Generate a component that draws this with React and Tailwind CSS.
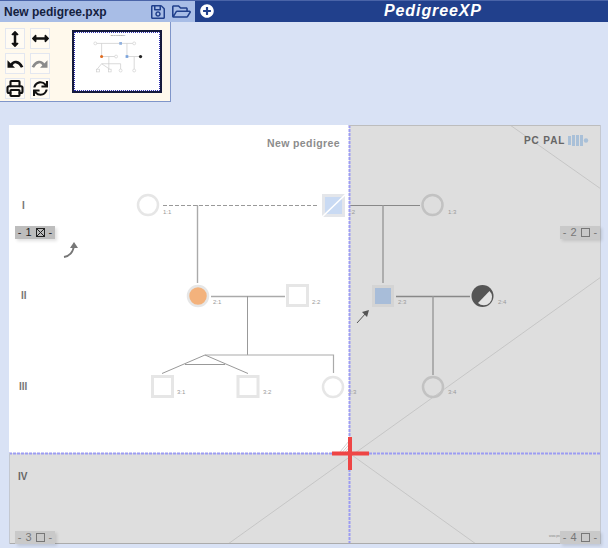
import { FaArrowsAltV, FaArrowsAltH, FaPlusCircle, FaRegSave, FaRegFolderOpen, FaSync } from "react-icons/fa";
import { LuPrinter } from "react-icons/lu";

const font = { fontFamily: "'Liberation Sans', Arial, sans-serif" };

const ToolButton = ({ children, muted }) => (
  <div
    className={`w-[20px] h-[21px] flex items-center justify-center bg-white/40 border border-[#e3e7f0] ${
      muted ? "text-[#8a8a8a]" : "text-[#111]"
    }`}
  >
    {children}
  </div>
);

const UndoIcon = ({ flip }) => (
  <svg width="19" height="19" viewBox="0 0 24 24" className={flip ? "-scale-x-100" : ""}>
    <path d="M7 14C10 8.5 17 8 21.5 17" fill="none" stroke="currentColor" strokeWidth="3.6" />
    <path d="M2 7.5V17.5H12Z" fill="currentColor" />
  </svg>
);

const Thumbnail = () => (
  <div className="w-[90px] h-[63px] border-2 border-[#161b3c] bg-white mt-[2px]">
    <svg viewBox="0 0 90 63" className="w-full h-full border border-dotted border-[#3030b0]">
      <text x="38" y="3" fontSize="2.6" fill="#555">New pedigree</text>
      <path d="M21 11.5H64M28 11.5V26M56 11.5V26M29 26H44M57 26H71M36 26V40M64 26V40M28 34H49V40M28 34L23 40M28 34L37 40" stroke="#ccc" strokeWidth="0.8" fill="none" />
      <circle cx="21" cy="11.5" r="1.6" fill="#fff" stroke="#ccc" strokeWidth="0.7" />
      <rect x="47.5" y="10" width="3" height="3" fill="#8fb0de" />
      <circle cx="64" cy="11.5" r="1.6" fill="#fff" stroke="#ccc" strokeWidth="0.7" />
      <circle cx="28" cy="26" r="1.7" fill="#e06b20" />
      <circle cx="44" cy="26" r="1.6" fill="#fff" stroke="#ccc" strokeWidth="0.7" />
      <rect x="54.5" y="24.5" width="3" height="3" fill="#7aa3dc" />
      <circle cx="71" cy="26" r="1.8" fill="#222" />
      <rect x="22.5" y="40" width="3" height="3" fill="#fff" stroke="#ccc" strokeWidth="0.7" />
      <rect x="35.5" y="40" width="3" height="3" fill="#fff" stroke="#ccc" strokeWidth="0.7" />
      <circle cx="49" cy="41.5" r="1.6" fill="#fff" stroke="#ccc" strokeWidth="0.7" />
      <circle cx="64" cy="41.5" r="1.6" fill="#fff" stroke="#ccc" strokeWidth="0.7" />
    </svg>
  </div>
);

const PageTag = ({ label, active, className }) => (
  <div
    className={`absolute w-[40px] h-[13px] flex items-center justify-center gap-[4px] text-[11px] leading-none shadow-[2px_2px_3px_rgba(0,0,0,0.12)] ${className} ${
      active ? "bg-[#bdbdbd] text-[#222]" : "bg-[#c9c9c9] text-[#777]"
    }`}
  >
    <span>-</span>
    <span>{label}</span>
    {active ? (
      <svg width="9" height="9" viewBox="0 0 9 9">
        <rect x="0.5" y="0.5" width="8" height="8" fill="none" stroke="#222" />
        <path d="M1 1L8 8M8 1L1 8" stroke="#222" strokeWidth="1" />
      </svg>
    ) : (
      <svg width="9" height="9" viewBox="0 0 9 9">
        <rect x="0.5" y="0.5" width="8" height="8" fill="none" stroke="#777" />
      </svg>
    )}
    <span>-</span>
  </div>
);

const Label = ({ x, y, children }) => (
  <text x={x} y={y} fontSize="6" fill="#999">{children}</text>
);

const Pedigree = () => (
  <svg viewBox="9 125 592 419" className="w-[592px] h-[419px] block" style={font}>
    <rect x="9" y="125" width="592" height="419" fill="#dedede" />
    <rect x="9" y="125" width="340" height="328" fill="#fff" />

    <g stroke="#c6c6c6" strokeWidth="1" fill="none">
      <path d="M228 544L601 277" />
      <path d="M349 453L476 544" />
      <path d="M510 125L601 189" />
    </g>

    <text x="340" y="147" textAnchor="end" fontSize="10.5" fontWeight="700" fill="#8c8c8c" letterSpacing="0.4">New pedigree</text>
    <text x="524" y="144" fontSize="10" fontWeight="700" fill="#666" letterSpacing="0.9">PC PAL</text>
    <path d="M568 136h3v9h-3zM572 135h3v11h-3zM576 135h3v11h-3zM580 135h3v11h-3z" fill="#a9c0d8" />
    <circle cx="586" cy="140.5" r="2.2" fill="#a9c0d8" />

    <g fontSize="10" fontWeight="700" fill="#777">
      <text x="22" y="209">I</text>
      <text x="21" y="299">II</text>
      <text x="19" y="390">III</text>
      <text x="18" y="480" fill="#666">IV</text>
    </g>

    <g fill="none" strokeWidth="1">
      <path d="M163 205.5H318" stroke="#999" strokeDasharray="4 2" />
      <path d="M349 205.5H420" stroke="#888" />
      <path d="M197.5 205V283" stroke="#aaa" strokeWidth="1.4" />
      <path d="M383 205V283" stroke="#999" strokeWidth="1.4" />
      <path d="M211 296.5H285" stroke="#aaa" strokeWidth="1.3" />
      <path d="M396 296.5H470" stroke="#888" strokeWidth="1.3" />
      <path d="M247.5 296V355" stroke="#999" />
      <path d="M433 296V375" stroke="#999" strokeWidth="1.4" />
      <path d="M205 355H333.5V373" stroke="#aaa" strokeWidth="1.2" />
      <path d="M162 373.5L205 355L248 373.5M185 364.5H225" stroke="#999" />
    </g>

    <circle cx="148" cy="205" r="10" fill="#fff" stroke="#e6e6e6" strokeWidth="2.5" />
    <rect x="323.5" y="195.5" width="20" height="20" fill="#c9daf3" stroke="#e4e6ea" strokeWidth="3" />
    <path d="M321 218L346 194" stroke="#fff" strokeWidth="1.6" />
    <circle cx="432.5" cy="205" r="10" fill="none" stroke="#c2c2c2" strokeWidth="2.5" />

    <circle cx="198" cy="296" r="10" fill="#f3b27c" stroke="#e6e6e6" strokeWidth="2.5" />
    <rect x="287.5" y="285.5" width="20" height="20" fill="#fff" stroke="#e6e6e6" strokeWidth="3" />
    <rect x="373.5" y="286.5" width="19" height="19" fill="#a8bdd9" stroke="#d4d4d4" strokeWidth="3" />
    <circle cx="482.5" cy="296" r="11" fill="#555" />
    <path d="M489.5 291A8 8 0 0 1 478 303Z" fill="#e4e4e4" />

    <rect x="152.5" y="376.5" width="20" height="20" fill="#fff" stroke="#e6e6e6" strokeWidth="3" />
    <rect x="238" y="376.5" width="20" height="20" fill="#fff" stroke="#e6e6e6" strokeWidth="3" />
    <circle cx="333" cy="387" r="10" fill="#fff" stroke="#e6e6e6" strokeWidth="2.5" />
    <circle cx="433" cy="387" r="10" fill="none" stroke="#c2c2c2" strokeWidth="2.5" />

    <Label x="163" y="214">1:1</Label>
    <Label x="350" y="214">:2</Label>
    <Label x="448" y="214">1:3</Label>
    <Label x="213" y="304">2:1</Label>
    <Label x="312" y="304">2:2</Label>
    <Label x="398" y="304">2:3</Label>
    <Label x="498" y="304">2:4</Label>
    <Label x="177" y="394">3:1</Label>
    <Label x="263" y="394">3:2</Label>
    <Label x="348" y="394">3:3</Label>
    <Label x="448" y="394">3:4</Label>

    <path d="M64 257C70 256 73 252 74 246" fill="none" stroke="#777" strokeWidth="1.8" />
    <path d="M70 248L74 242L78 248Z" fill="#777" />
    <path d="M357 323L366 313" stroke="#555" strokeWidth="1" />
    <path d="M362 312L369 310L367 317Z" fill="#555" />

    <text x="549" y="537" fontSize="3" fill="#888">www.ped</text>

    <path d="M349.5 125V544" stroke="#9c9cf2" strokeWidth="2" strokeDasharray="3 1" />
    <path d="M9 453.5H601" stroke="#9c9cf2" strokeWidth="2" strokeDasharray="3 1" />

    <path d="M340 452L349 441M342.5 452L349 444.5M345 452L349 447.5M347 452L349 450" stroke="#bbb" strokeWidth="0.7" />
    <path d="M332 451.5H369V455.5H352V470H348V455.5H332ZM348 437H352V451.5H348Z" fill="#ee4545" />

    <path d="M9 543.5H601" stroke="#ababab" />
    <path d="M349 125.5H601" stroke="#bdbdbd" />
    <path d="M600.5 125V544" stroke="#c4c8d0" />
    <path d="M9.5 453V544" stroke="#c4c8d0" />
  </svg>
);

const App = () => (
  <div className="w-[608px] h-[548px] bg-[#d9e2f5] overflow-hidden" style={font}>
    <header className="h-[22px] flex bg-[#21408c] border-t border-[#4a64a8]">
      <div className="w-[195px] bg-[#a8bde6] flex items-center">
        <span className="pl-[4px] w-[150px] text-[12px] font-bold text-[#14213f]">New pedigree.pxp</span>
        <div className="flex items-center gap-[6px] text-[#21408c]">
          <FaRegSave size={16} />
          <FaRegFolderOpen size={19} />
        </div>
      </div>
      <FaPlusCircle size={14} className="text-white ml-[5px] mt-[3px]" />
      <span className="ml-[170px] mt-[1px] text-[16px] font-bold italic text-white tracking-[0.9px] leading-[18px]">
        PedigreeXP
      </span>
    </header>

    <div className="w-[171px] h-[80px] bg-[#fff9ec] border-r border-b border-[#7f95c9] flex pl-[5px] pt-[6px]">
      <div className="grid grid-cols-2 gap-x-[5px] gap-y-[4px] w-[45px] h-[70px] content-start">
        <ToolButton><FaArrowsAltV size={16} /></ToolButton>
        <ToolButton><FaArrowsAltH size={17} /></ToolButton>
        <ToolButton><UndoIcon /></ToolButton>
        <ToolButton muted><UndoIcon flip /></ToolButton>
        <ToolButton><LuPrinter size={19} strokeWidth={2.8} /></ToolButton>
        <ToolButton><FaSync size={15} /></ToolButton>
      </div>
      <div className="ml-[22px]">
        <Thumbnail />
      </div>
    </div>

    <div className="relative w-[592px] h-[419px] ml-[9px] mt-[23px]">
      <Pedigree />
      <PageTag label="1" active className="left-[6px] top-[101px]" />
      <PageTag label="2" className="right-[1px] top-[101px]" />
      <PageTag label="3" className="left-[6px] bottom-0" />
      <PageTag label="4" className="right-[1px] bottom-0" />
    </div>
  </div>
);

export default App;
